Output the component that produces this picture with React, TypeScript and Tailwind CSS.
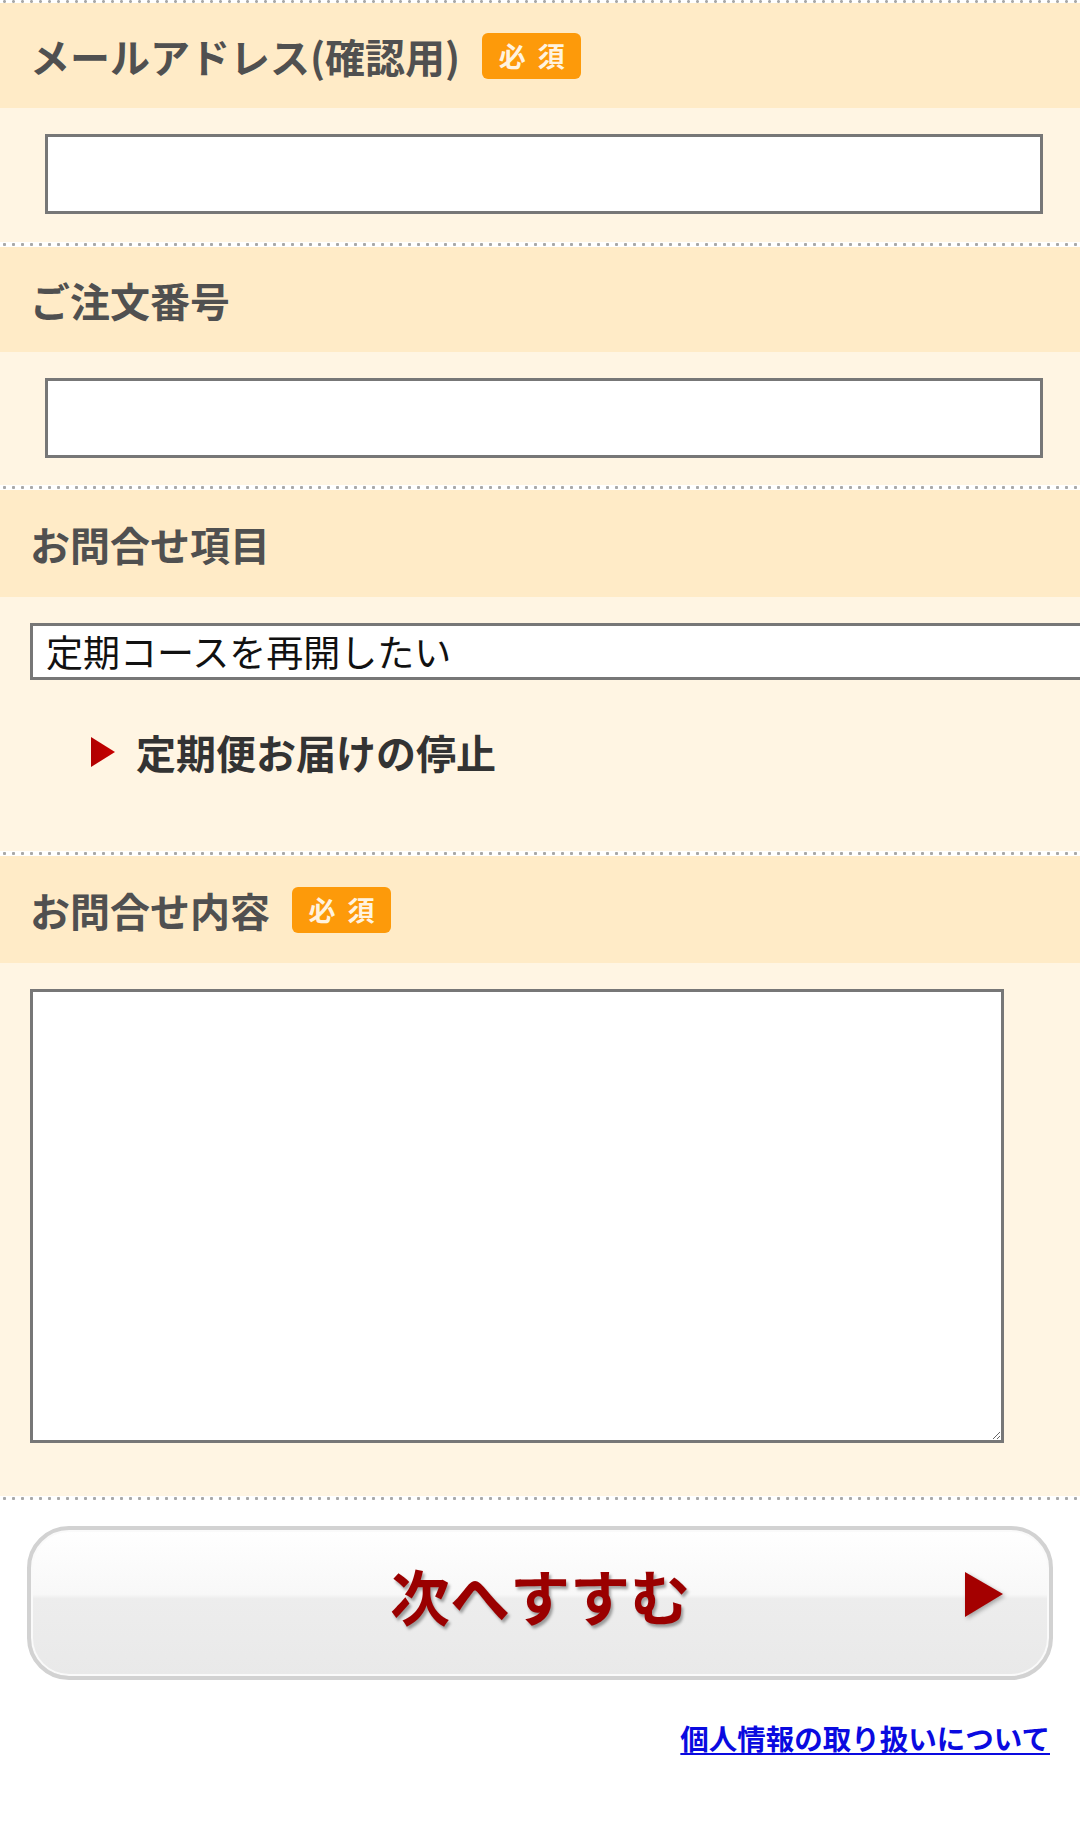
import React from "react";

function Sep({ thin }: { thin?: boolean }) {
  return (
    <div
      className={
        thin
          ? "h-[3px] bg-white bg-[radial-gradient(circle,#a8a8a8_1.2px,transparent_1.7px)] bg-[length:9px_3px]"
          : "h-[5px] bg-white bg-[radial-gradient(circle,#a8a8a8_1.3px,transparent_1.9px)] bg-[length:9px_5px]"
      }
    />
  );
}

function Badge() {
  return (
    <span className="inline-flex h-[46px] w-[99px] items-center justify-center rounded-[6px] bg-[#fd9a0a] text-[27px] font-bold leading-none tracking-[12px] text-[#fff3e0] pl-[12px]">
      必須
    </span>
  );
}

function Header({ label, required, tall }: { label: string; required?: boolean; tall?: boolean }) {
  return (
    <div
      className={
        (tall ? "h-[107px] " : "h-[105px] ") +
        "flex items-center gap-[22px] bg-[#ffebc7] pl-[30px]"
      }
    >
      <span className="text-[40px] font-bold leading-none text-[#505050]">{label}</span>
      {required && <Badge />}
    </div>
  );
}

export default function App() {
  return (
    <div className="w-[1080px] overflow-hidden bg-white font-['Noto_Sans_CJK_JP','Noto_Sans',sans-serif] pb-[80px]">
      <Sep thin />
      <Header label="メールアドレス(確認用)" required />
      <div className="bg-[#fff5e3] pl-[45px] pr-[37px] pt-[26px] pb-[28px]">
        <input
          type="text"
          className="block h-[80px] w-full border-[3px] border-[#777] bg-white outline-none"
        />
      </div>
      <Sep />
      <Header label="ご注文番号" />
      <div className="bg-[#fff5e3] pl-[45px] pr-[37px] pt-[26px] pb-[27px]">
        <input
          type="text"
          className="block h-[80px] w-full border-[3px] border-[#777] bg-white outline-none"
        />
      </div>
      <Sep />
      <Header label="お問合せ項目" tall />
      <div className="bg-[#fff5e3] pl-[30px] pt-[26px] pb-[79px]">
        <select
          defaultValue="a"
          className="block h-[57px] w-[1120px] appearance-none border-[3px] border-[#777] bg-white pl-[13px] text-[37px] leading-none text-[#111] outline-none"
        >
          <option value="a">定期コースを再開したい</option>
        </select>
        <div className="mt-[52px] flex h-[40px] items-center pl-[60px]">
          <svg width="26" height="32" viewBox="0 0 26 32" className="mr-[20px]">
            <defs>
              <linearGradient id="tri1" x1="0" y1="0" x2="1" y2="0">
                <stop offset="0" stopColor="#b00000" />
                <stop offset="1" stopColor="#c80000" />
              </linearGradient>
            </defs>
            <polygon points="1,1 25,16 1,31" fill="url(#tri1)" />
          </svg>
          <span className="text-[40px] font-bold leading-none text-[#333]">定期便お届けの停止</span>
        </div>
      </div>
      <Sep />
      <Header label="お問合せ内容" required tall />
      <div className="bg-[#fff5e3] pl-[30px] pt-[26px] pb-[53px]">
        <textarea className="block h-[454px] w-[974px] border-[3px] border-[#777] bg-white outline-none" />
      </div>
      <Sep />
      <div className="px-[27px] pt-[25px]">
        <button
          type="button"
          className="relative flex h-[154px] w-full items-center justify-center rounded-[42px] border-[4px] border-[#d2d2d2] bg-[linear-gradient(to_bottom,#ffffff_0%,#f8f8f8_44%,#ededed_47%,#e9e9e9_100%)] pb-[16px] shadow-[inset_0_0_0_2px_#fafafa]"
        >
          <span className="text-[60px] font-bold leading-none text-[#9a0000] [text-shadow:2px_3px_3px_rgba(0,0,0,0.35)]">
            次へすすむ
          </span>
          <svg
            width="42"
            height="50"
            viewBox="0 0 42 50"
            className="absolute right-[44px] top-[40px] drop-shadow-[2px_2px_2px_rgba(0,0,0,0.3)]"
          >
            <polygon points="2,2 40,24 2,47" fill="#a40000" />
          </svg>
        </button>
      </div>
      <div className="flex justify-end pr-[30px] pt-[44px]">
        <a href="#" className="text-[28.5px] font-bold leading-none text-[#0a0ae0] underline underline-offset-[3px]">
          個人情報の取り扱いについて
        </a>
      </div>
    </div>
  );
}
